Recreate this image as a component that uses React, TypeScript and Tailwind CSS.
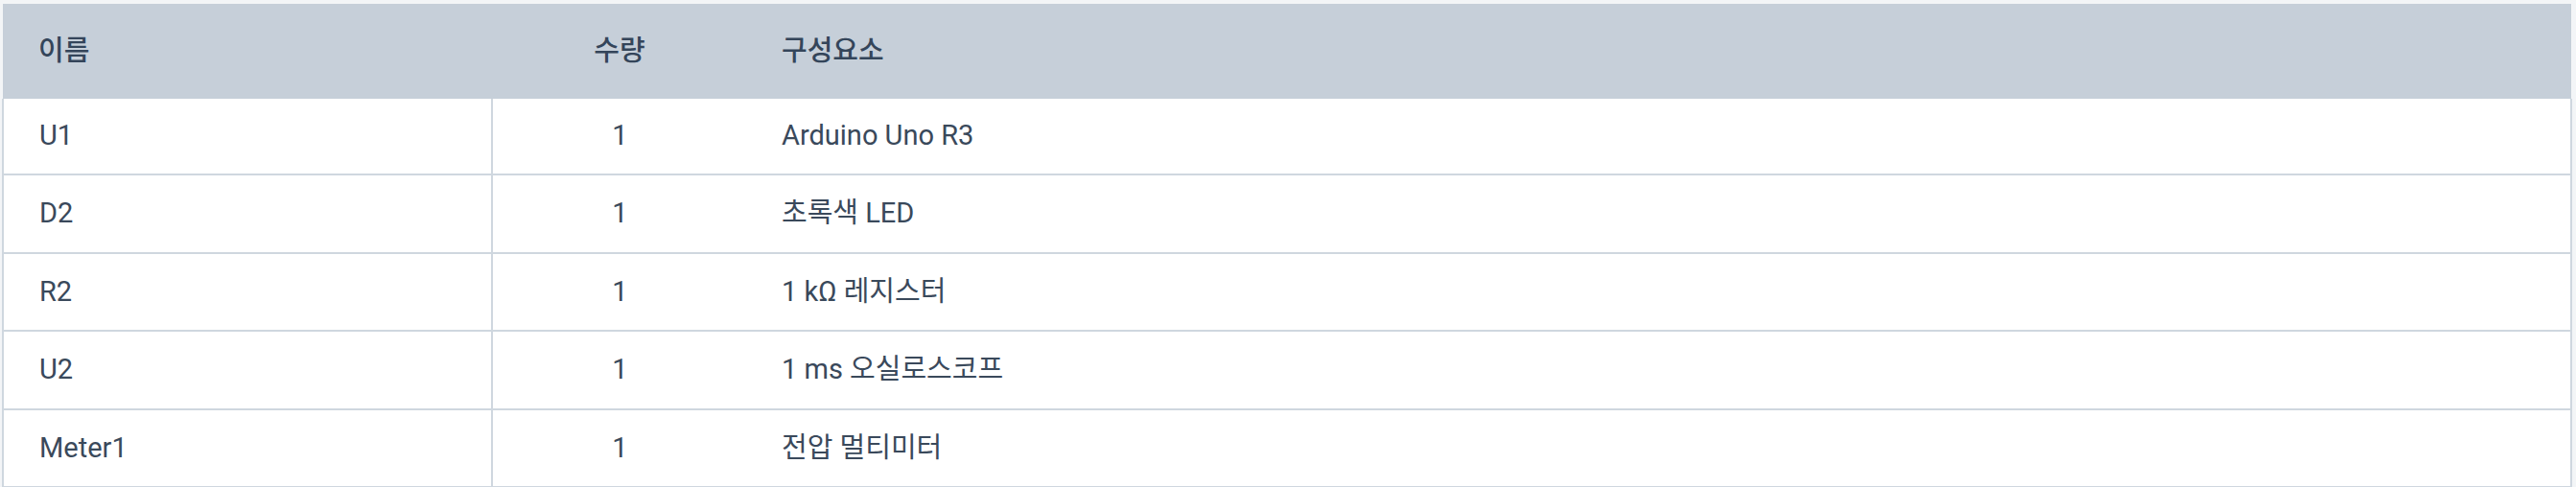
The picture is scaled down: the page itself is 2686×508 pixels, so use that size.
import React from 'react';

interface Part {
  name: string;
  qty: number;
  component: string;
}

const parts: Part[] = [
  { name: 'U1', qty: 1, component: 'Arduino Uno R3' },
  { name: 'D2', qty: 1, component: '초록색 LED' },
  { name: 'R2', qty: 1, component: '1 kΩ 레지스터' },
  { name: 'U2', qty: 1, component: '1 ms 오실로스코프' },
  { name: 'Meter1', qty: 1, component: '전압 멀티미터' },
];

const App: React.FC = () => {
  return (
    <div
      className="w-[2686px] h-[508px] bg-[#f3f5f7] pt-[4px] pl-[2px] pr-[4px] overflow-hidden"
      style={{ fontFamily: 'Roboto, "Noto Sans CJK KR", sans-serif' }}
    >
      <table className="w-full border-collapse table-fixed text-[29px] text-[#3a495b]">
        <colgroup>
          <col className="w-[510px]" />
          <col className="w-[266px]" />
          <col />
        </colgroup>
        <thead>
          <tr className="h-[99px] bg-[#c6cfd9] text-[#34455a]">
            <th className="pl-[37px] text-left font-medium">이름</th>
            <th className="text-center font-medium">수량</th>
            <th className="pl-[36px] text-left font-medium">구성요소</th>
          </tr>
        </thead>
        <tbody className="bg-white">
          {parts.map((p, i) => (
            <tr
              key={p.name}
              className={`border-b-2 border-[#cfd7df] ${i === 0 ? 'h-[79px]' : 'h-[81.5px]'}`}
            >
              <td className="pl-[37px] border-l-2 border-r-2 border-[#cfd7df]">{p.name}</td>
              <td className="text-center">{p.qty}</td>
              <td className="pl-[36px] border-r-2 border-[#cfd7df]">{p.component}</td>
            </tr>
          ))}
        </tbody>
      </table>
    </div>
  );
};

export default App;
